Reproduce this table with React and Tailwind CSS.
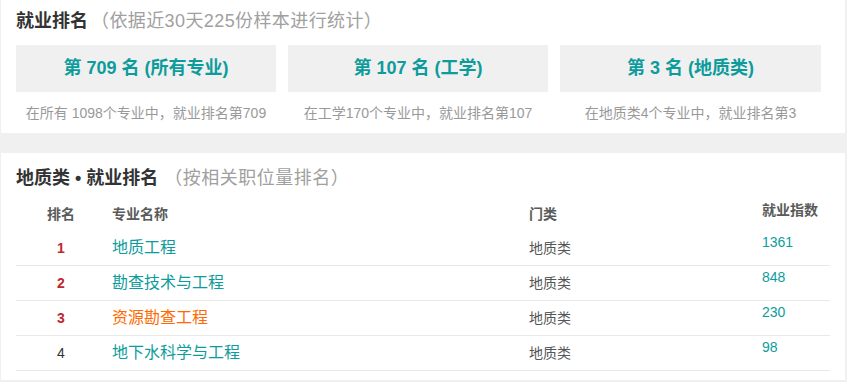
import React from "react";

const font = { fontFamily: '"Liberation Sans", Arial, "Noto Sans CJK SC", sans-serif' };

const boxes = [
  { big: "第 709 名 (所有专业)", small: "在所有 1098个专业中，就业排名第709" },
  { big: "第 107 名 (工学)", small: "在工学170个专业中，就业排名第107" },
  { big: "第 3 名 (地质类)", small: "在地质类4个专业中，就业排名第3" },
];

const rows = [
  { rank: "1", name: "地质工程", cat: "地质类", idx: "1361", top: true },
  { rank: "2", name: "勘查技术与工程", cat: "地质类", idx: "848", top: true },
  { rank: "3", name: "资源勘查工程", cat: "地质类", idx: "230", top: true, hl: true },
  { rank: "4", name: "地下水科学与工程", cat: "地质类", idx: "98", top: false },
];

export default function App() {
  return (
    <div className="w-[847px] h-[382px] bg-[#f0f0f0] pl-px pr-[2px] overflow-hidden" style={font}>
      <div className="bg-white px-[15px] pt-[10px] pb-[10px]">
        <div className="flex items-baseline leading-[22px] text-[18px]">
          <span className="font-bold text-[#333]">就业排名</span>
          <span className="text-[#a0a0a0] ml-[3px] tracking-[0.4px]">（依据近30天225份样本进行统计）</span>
        </div>
        <div className="mt-[13px] grid grid-cols-[260px_260px_261px] gap-x-[12px]">
          {boxes.map((b) => (
            <div key={b.big} className="flex flex-col items-center">
              <div className="w-full h-[47px] bg-[#f0f0f0] flex items-center justify-center text-[18px] font-bold text-[#0d9c9c]">
                {b.big}
              </div>
              <div className="mt-[11px] leading-[20px] text-[14px] text-[#999]">{b.small}</div>
            </div>
          ))}
        </div>
      </div>
      <div className="h-[20px]" />
      <div className="bg-white px-[15px] pt-[14px] pb-[9px]">
        <div className="flex items-baseline leading-[22px] text-[18px]">
          <span className="font-bold text-[#333]">地质类 • 就业排名</span>
          <span className="text-[#a0a0a0] ml-[6px] tracking-[0.5px]">（按相关职位量排名）</span>
        </div>
        <div className="mt-[7px] w-[814px]">
          <div className="grid grid-cols-[90px_417px_233px_74px] h-[35px] items-center text-[14px] font-bold text-[#5a5a5a] leading-[20px]">
            <div className="text-center">排名</div>
            <div className="pl-[6px]">专业名称</div>
            <div className="pl-[6px]">门类</div>
            <div className="pl-[6px] self-start pt-[4px]">就业指数</div>
          </div>
          {rows.map((r) => (
            <div
              key={r.rank}
              className="grid grid-cols-[90px_417px_233px_74px] h-[35px] items-center border-b border-[#e8e8e8] leading-[20px]"
            >
              <div className={`text-center text-[14px] ${r.top ? "font-bold text-[#c0282d]" : "text-[#333]"}`}>{r.rank}</div>
              <div className={`pl-[6px] text-[16px] ${r.hl ? "text-[#ff6a00]" : "text-[#0d9c9c]"}`}>{r.name}</div>
              <div className="pl-[6px] text-[14px] text-[#555]">{r.cat}</div>
              <div className="pl-[6px] text-[14px] text-[#0d9c9c] self-start pt-[1px]">{r.idx}</div>
            </div>
          ))}
        </div>
      </div>
    </div>
  );
}
